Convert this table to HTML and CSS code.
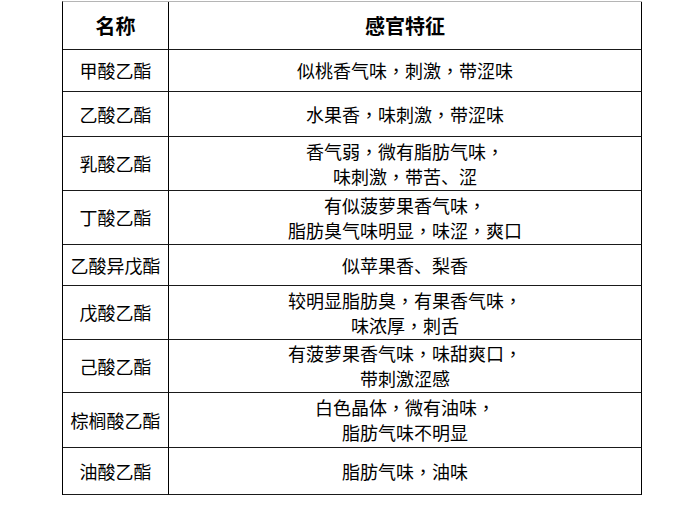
FILE: index.html
```html
<!DOCTYPE html>
<html lang="zh-CN">
<head>
<meta charset="utf-8">
<link rel="stylesheet" href="styles.css">
</head>
<body>
<div class="table">
  <div class="cell head">名称</div>
  <div class="cell head">感官特征</div>
  <div class="cell">甲酸乙酯</div>
  <div class="cell">似桃香气味<span class="p" lang="zh-TW">，</span>刺激<span class="p" lang="zh-TW">，</span>带涩味</div>
  <div class="cell">乙酸乙酯</div>
  <div class="cell">水果香<span class="p" lang="zh-TW">，</span>味刺激<span class="p" lang="zh-TW">，</span>带涩味</div>
  <div class="cell">乳酸乙酯</div>
  <div class="cell">香气弱<span class="p" lang="zh-TW">，</span>微有脂肪气味<span class="p" lang="zh-TW">，</span><br>味刺激<span class="p" lang="zh-TW">，</span>带苦、涩</div>
  <div class="cell">丁酸乙酯</div>
  <div class="cell">有似菠萝果香气味<span class="p" lang="zh-TW">，</span><br>脂肪臭气味明显<span class="p" lang="zh-TW">，</span>味涩<span class="p" lang="zh-TW">，</span>爽口</div>
  <div class="cell">乙酸异戊酯</div>
  <div class="cell">似苹果香、梨香</div>
  <div class="cell">戊酸乙酯</div>
  <div class="cell">较明显脂肪臭<span class="p" lang="zh-TW">，</span>有果香气味<span class="p" lang="zh-TW">，</span><br>味浓厚<span class="p" lang="zh-TW">，</span>刺舌</div>
  <div class="cell">己酸乙酯</div>
  <div class="cell">有菠萝果香气味<span class="p" lang="zh-TW">，</span>味甜爽口<span class="p" lang="zh-TW">，</span><br>带刺激涩感</div>
  <div class="cell">棕榈酸乙酯</div>
  <div class="cell">白色晶体<span class="p" lang="zh-TW">，</span>微有油味<span class="p" lang="zh-TW">，</span><br>脂肪气味不明显</div>
  <div class="cell">油酸乙酯</div>
  <div class="cell">脂肪气味<span class="p" lang="zh-TW">，</span>油味</div>
</div>
</body>
</html>
```
FILE: styles.css
```css
html, body {
  margin: 0;
  padding: 0;
  background: #fff;
}
body {
  font-family: "Noto Sans CJK SC", "Noto Sans", sans-serif;
  color: #000;
}
.table {
  display: grid;
  grid-template-columns: 106px 473px;
  grid-template-rows: 48px 42px 45px 54px 54px 41px 54px 53px 55px 47px;
  width: max-content;
  margin: 1px 0 0 62px;
  border-left: 1px solid #000;
  border-top: 1px solid #b5b5b5;
}
.cell {
  box-sizing: border-box;
  border-right: 1px solid #000;
  border-bottom: 1px solid #1a1a1a;
  display: block;
  align-content: center;
  text-align: center;
  font-size: 18px;
  line-height: 25px;
}
.head {
  font-weight: bold;
  font-size: 20px;
}
.p {
  font-family: "Noto Sans CJK TC", "Noto Sans CJK SC", sans-serif;
}
```
